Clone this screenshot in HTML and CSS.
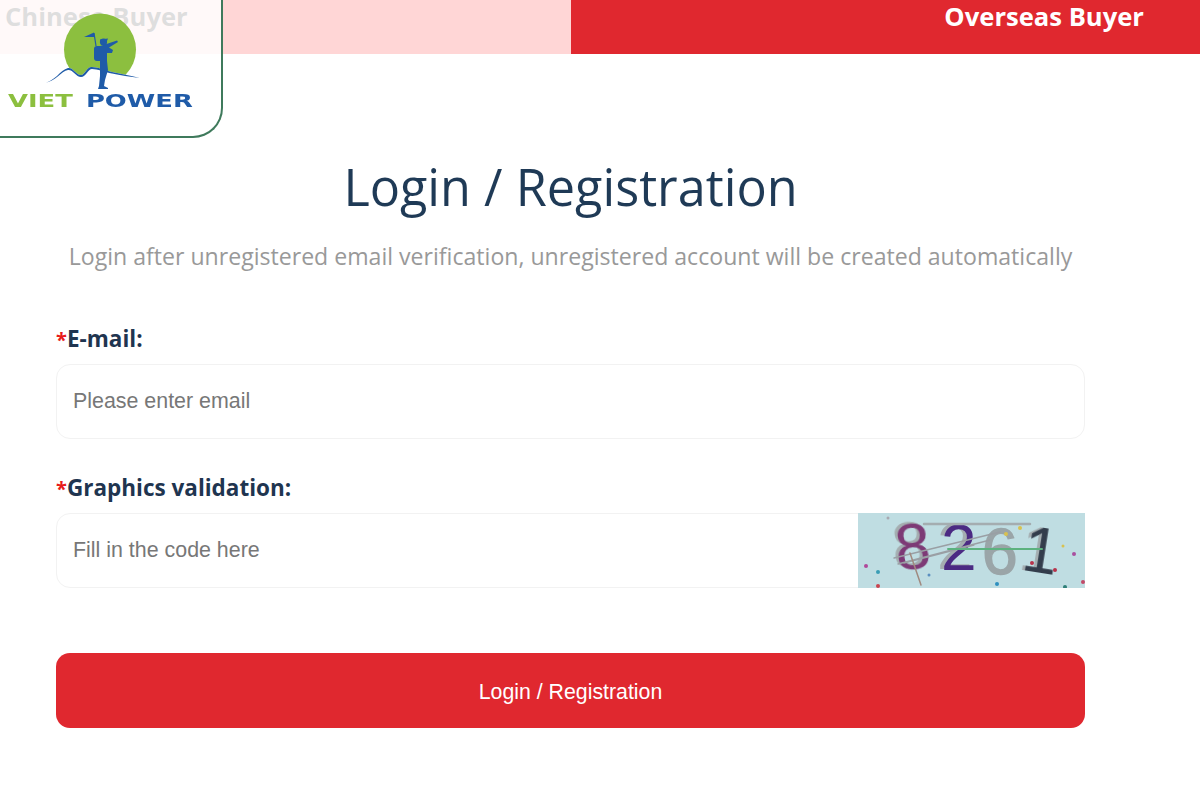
FILE: index.html
```html
<!DOCTYPE html>
<html>
<head>
  <meta charset="utf-8">
  <title>Login / Registration</title>
  <link rel="stylesheet" href="styles.css">
</head>
<body>
<div class="tabs">
  <div class="tab tab-cn">Chinese Buyer</div>
  <div class="tab tab-os">Overseas Buyer</div>
</div>

<div class="logo-card">
  <svg class="logo-art" width="222" height="137" viewBox="0 0 222 137">
    <circle cx="100" cy="49.500" r="36" fill="#8cbf3f"/>
    <!-- white ground under the ridge -->
    <path d="M43 83C55 82 60 70 68 68C73 67 76 75 81 75C85 75 87 66 92 67C97 67 105 70 112 72C122 74 132 76 140 78V90H43z" fill="#fff"/>
    <!-- ridge -->
    <path d="M43 83C55 82 60 70 68 68C73 67 76 75 81 75C85 75 87 66 92 67C97 67 105 70 112 72C122 74 132 76 140 78C130 77 120 75 112 73.500C105 72 97 69 92 69C88 69 86 77 81 77C76 77 73 69.500 68 70C61 71 56 82 43 83z" fill="#1f5ba8"/>
    <!-- hiker -->
    <g fill="#1f5ba8">
      <path d="M84 37L94 32.500L95 37z"/>
      <rect x="94" y="46" width="10" height="15" rx="3"/>
      <circle cx="103.500" cy="42" r="3.600"/>
      <path d="M100 39.500L108 38.500L107 41L100 41.500z"/>
      <path d="M100 46L105 44.500L117 40.500L118 42L109 47.500L113 50L112 53L107 53L107 61L108 70L105 80L104 86L108 88V89H98L99 86L100 76L100 66L100 60z"/>
    </g>
    <path d="M94 33L96 46" stroke="#1f5ba8" stroke-width="1.200" fill="none"/>
  </svg>
  <div class="logo-text"><span class="viet">VIET</span> <span class="power">POWER</span></div>
</div>

<div class="main">
  <h1 class="title">Login / Registration</h1>
  <p class="sub">Login after unregistered email verification, unregistered account will be created automatically</p>

  <div class="field">
    <label class="label"><span class="req">*</span>E-mail:</label>
    <div class="input-box">
      <input class="input" type="text" placeholder="Please enter email">
    </div>
  </div>

  <div class="field">
    <label class="label"><span class="req">*</span>Graphics validation:</label>
    <div class="input-box">
      <input class="input" type="text" placeholder="Fill in the code here">
      <svg class="captcha" width="227" height="75" viewBox="0 0 227 75">
        <rect width="227" height="75" fill="#bfdde2"/>
        <text class="cap-digit cap-8" x="37" y="56" transform="rotate(-5 55 35)">8</text>
        <text class="cap-digit cap-2" x="83" y="57">2</text>
        <text class="cap-digit cap-6" x="124" y="61">6</text>
        <text class="cap-digit cap-1" x="165" y="60" transform="rotate(9 185 40)">1</text>
        <g fill="none" stroke-linecap="round">
          <path d="M66 11h106" stroke="#a4adb0" stroke-width="2.500"/>
          <path d="M36 45l106-26M40 51l92-24M46 50l70-18" stroke="#9a9fa4" stroke-width="1.300"/>
          <path d="M52 40l11 32" stroke="#a08a80" stroke-width="1.500"/>
          <path d="M90 36h94" stroke="#5cb27f" stroke-width="2"/>
        </g>
        <g>
          <circle cx="8" cy="53" r="2" fill="#b0489a"/><circle cx="20" cy="59" r="2" fill="#3a9db5"/>
          <circle cx="20" cy="73" r="2" fill="#c9444f"/><circle cx="174" cy="50" r="2" fill="#b8324a"/>
          <circle cx="197" cy="57" r="2" fill="#b8324a"/><circle cx="216" cy="41" r="2" fill="#a9509f"/>
          <circle cx="225" cy="69" r="2" fill="#c24a68"/><circle cx="207" cy="74" r="2" fill="#2e7f78"/>
          <circle cx="139" cy="71" r="2" fill="#2f8fbf"/><circle cx="71" cy="62" r="1.500" fill="#5b8fc0"/>
          <circle cx="148" cy="21" r="2" fill="#d8c24f"/><circle cx="162" cy="15" r="2" fill="#d8c24f"/>
          <circle cx="30" cy="5" r="1.500" fill="#a8a8b0"/><circle cx="205" cy="33" r="1.500" fill="#d8c24f"/>
        </g>
      </svg>
    </div>
  </div>

  <button class="btn" type="button">Login / Registration</button>
</div>
</body>
</html>
```

FILE: styles.css
```css
*{
  margin: 0;
  padding: 0;
  box-sizing: border-box;
}
body{
  background: #fff;
  font-family: "Open Sans", "Noto Sans", sans-serif;
  color: #1f3550;
}
.tabs{
  display: flex;
  height: 54px;
}
.tab{
  font-size: 25.6px;
  font-weight: 700;
  line-height: 33px;
}
.tab-cn{
  width: 571px;
  padding-left: 5px;
  background: #ffd6d6;
  color: #222;
}
.tab-os{
  flex: 1;
  text-align: right;
  padding-right: 56px;
  background: #e0282f;
  color: #fff;
}
.logo-card{
  position: absolute;
  left: 0;
  top: 0;
  width: 223px;
  height: 138px;
  background: rgba(255,255,255,0.85);
  border: 2px solid #3f7a5c;
  border-left: 0;
  border-top: 0;
  border-bottom-right-radius: 30px;
}
.logo-art{
  position: absolute;
  left: 0;
  top: 0;
}
.logo-text{
  position: absolute;
  left: 8px;
  top: 90px;
  font-family: "DejaVu Sans", sans-serif;
  font-size: 17px;
  line-height: 22px;
  font-weight: 700;
  white-space: nowrap;
  word-spacing: 2.6px;
  transform: scaleX(1.52);
  transform-origin: left center;
}
.viet{
  color: #8cbf3f;
}
.power{
  color: #1f5ba8;
}
.main{
  width: 1141px;
  padding: 0 56px;
}
.title{
  margin-top: 100px;
  text-align: center;
  font-size: 50.4px;
  line-height: 66px;
  font-weight: 400;
  color: #1f3a56;
}
.sub{
  margin: 20px -30px 0;
  text-align: center;
  font-size: 23.1px;
  line-height: 32px;
  color: #999;
  white-space: nowrap;
}
.field{
  margin-top: 50px;
}
.field + .field{
  margin-top: 32px;
}
.label{
  display: block;
  font-size: 22.5px;
  line-height: 34px;
  font-weight: 700;
  color: #1f3550;
  margin-bottom: 7px;
}
.req{
  font-size: 20px;
  color: #e81c1c;
}
.input-box{
  display: flex;
  height: 75px;
  border: 1px solid #f2f2f2;
  border-radius: 14px;
}
.input{
  flex: 1;
  min-width: 0;
  border: 0;
  outline: 0;
  padding-left: 16px;
  font-family: "Liberation Sans", Arial, sans-serif;
  font-size: 21.4px;
  background: transparent;
}
.input::placeholder{
  color: #777;
}
.captcha{
  display: block;
  flex: none;
  margin: -1px -1px -1px 0;
  filter: blur(0.6px);
}
.cap-digit{
  font-family: "Liberation Sans", sans-serif;
  font-size: 64px;
}
.cap-8{
  fill: #7d3a76;
  filter: drop-shadow(-3px -2px 0 #a4adb0);
}
.cap-2{
  fill: #4b2a83;
  filter: drop-shadow(-4px -1px 0 #a4adb0);
}
.cap-6{
  fill: #9aa5a8;
  stroke: #9aa5a8;
  stroke-width: 1.5px;
}
.cap-1{
  fill: #333d4c;
  filter: drop-shadow(-3px 0 0 #a4adb0);
}
.btn{
  display: block;
  width: 100%;
  height: 75px;
  margin-top: 65px;
  padding-top: 3px;
  border: 0;
  border-radius: 14px;
  background: #e0282f;
  color: #fff;
  font-family: "Liberation Sans", Arial, sans-serif;
  font-size: 21.3px;
}
```
